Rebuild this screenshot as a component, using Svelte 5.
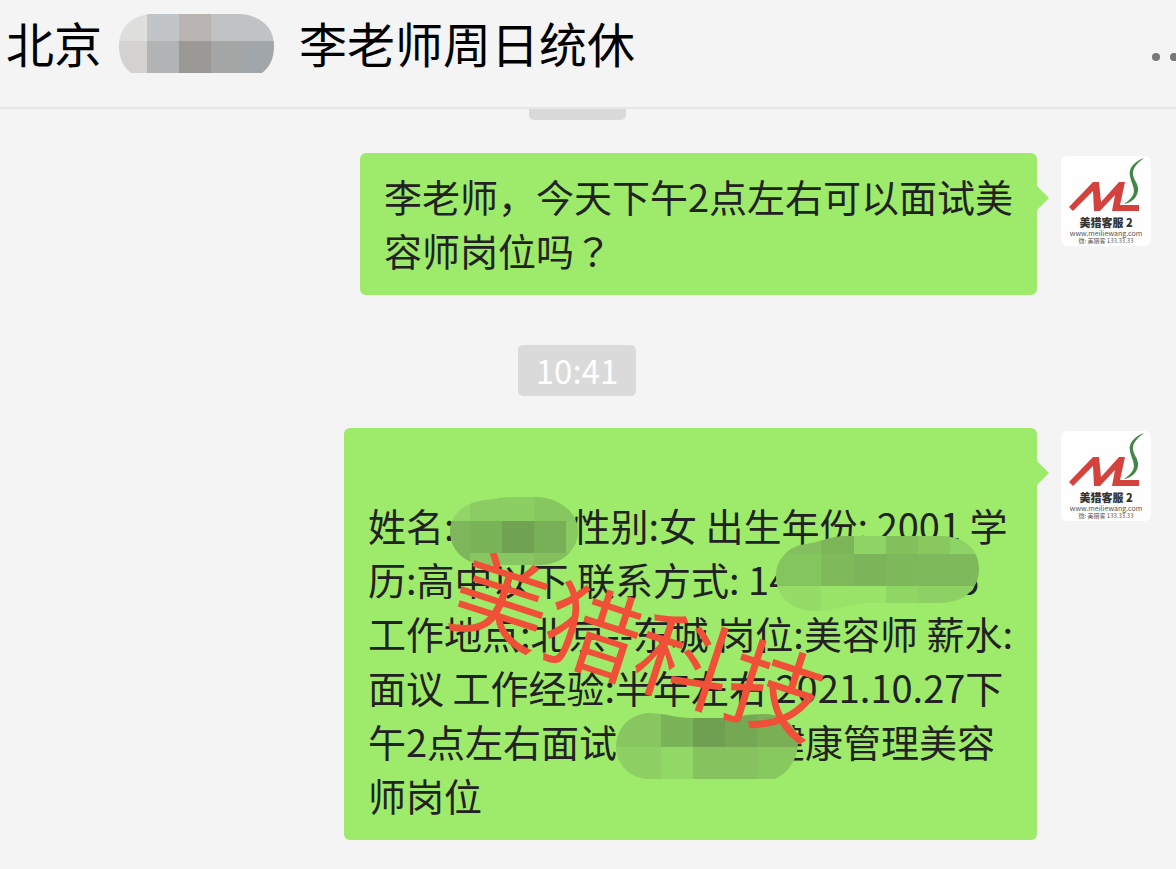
<script lang="ts">
  type Tile = [number, number, number, number, string];

  const titleTiles: Tile[] = [
    [0, 0, 28, 27, '#dededd'],
    [28, 0, 32, 27, '#c2c5c7'],
    [60, 0, 32, 27, '#b9b4b1'],
    [92, 0, 64, 27, '#c1c2c3'],
    [0, 27, 28, 33, '#d3d2d1'],
    [28, 27, 32, 33, '#b1b3b5'],
    [60, 27, 32, 33, '#9b9995'],
    [92, 27, 32, 33, '#a4a6a5'],
    [124, 27, 32, 33, '#a1a6aa']
  ];

  const nameTiles: Tile[] = [
    [0, 0, 20, 24, '#91d667'],
    [20, 0, 32, 24, '#8bcd63'],
    [52, 0, 32, 24, '#8bce62'],
    [84, 0, 44, 24, '#86c75f'],
    [0, 24, 20, 44, '#7db65b'],
    [20, 24, 32, 32, '#7ab458'],
    [52, 24, 32, 32, '#70a351'],
    [84, 24, 32, 32, '#78b057'],
    [116, 24, 12, 32, '#88c961'],
    [20, 56, 64, 12, '#87c660'],
    [84, 56, 44, 12, '#83c05d']
  ];

  const phoneTiles: Tile[] = [
    [0, 0, 45, 18, '#83bf5e'],
    [45, 0, 33, 18, '#7db659'],
    [78, 0, 32, 18, '#8fd367'],
    [110, 0, 32, 18, '#83c15d'],
    [142, 0, 32, 18, '#88c85f'],
    [174, 0, 30, 18, '#8ed365'],
    [0, 18, 45, 32, '#84c55e'],
    [45, 18, 33, 32, '#7fba5a'],
    [78, 18, 32, 32, '#7cb559'],
    [110, 18, 32, 32, '#7db95a'],
    [142, 18, 62, 32, '#7eba5b'],
    [0, 50, 45, 25, '#94dc67'],
    [45, 50, 65, 25, '#98e368'],
    [110, 50, 32, 25, '#90d665'],
    [142, 50, 62, 25, '#8dd164']
  ];

  const shopTiles: Tile[] = [
    [0, 0, 45, 34, '#88c760'],
    [45, 0, 32, 34, '#7bb358'],
    [77, 0, 32, 34, '#6f9f50'],
    [109, 0, 32, 34, '#74a853'],
    [141, 0, 41, 34, '#7aaf56'],
    [0, 34, 45, 32, '#8dcf62'],
    [45, 34, 32, 32, '#91d866'],
    [77, 34, 65, 32, '#86c35e'],
    [142, 34, 40, 32, '#88c95f']
  ];
</script>

{#snippet mosaic(id: string, width: number, height: number, shape: string, tiles: Tile[])}
  <svg class="mosaic {id}" {width} {height} viewBox="0 0 {width} {height}" aria-hidden="true">
    <clipPath id="{id}-shape"><path d={shape} /></clipPath>
    <g clip-path="url(#{id}-shape)" shape-rendering="crispEdges">
      {#each tiles as [x, y, w, h, fill]}
        <rect {x} {y} width={w} height={h} {fill} />
      {/each}
    </g>
  </svg>
{/snippet}

{#snippet avatar()}
  <svg class="avatar" viewBox="0 0 90 90" role="img" aria-label="美猎客服2">
    <rect width="90" height="90" rx="6" fill="#fefefe" />
    <path d="M8 51 L32 26 H38 L40 46 L58 26 H64 L59 49 H78 V55 H51 L54 39 L39 55 H33 L32 35 L12 55 Z" fill="#d3423c" />
    <path d="M83 2 C74 5 67 12 69 20 C70 27 75 33 72 39 C70 43 66 46 63 48 C70 47 76 42 77 35 C78 27 71 23 72 16 C73 10 78 6 83 2 Z" fill="#438747" />
    <text class="logo-name" x="45" y="71" text-anchor="middle">美猎客服 2</text>
    <text class="logo-small" x="45" y="80" text-anchor="middle">www.meiliewang.com</text>
    <text class="logo-tiny" x="45" y="87" text-anchor="middle">微: 美猎客 133.33.33</text>
  </svg>
{/snippet}

<main class="window">
  <header class="topbar">
    <h1 class="title">
      <span>北京</span>
      {@render mosaic('title-mask', 156, 59, 'M30 0 H122 C143 2 155 14 155 32 C155 44 151 53 143 59 H12 C4 53 0 44 0 32 C0 13 12 3 30 0 Z', titleTiles)}
      <span>李老师周日统休</span>
    </h1>
    <button class="more" type="button" aria-label="更多">
      <svg width="48" height="12" viewBox="0 0 48 12">
        <circle cx="6" cy="6" r="4" />
        <circle cx="24" cy="6" r="4" />
        <circle cx="42" cy="6" r="4" />
      </svg>
    </button>
  </header>

  <section class="chat">
    <div class="time-cut"></div>

    <article class="message">
      <div class="bubble">
        <p>李老师，今天下午2点左右可以面试美<br />容师岗位吗<span class="mark">？</span></p>
      </div>
      {@render avatar()}
    </article>

    <time class="time">10:41</time>

    <article class="message">
      <div class="bubble">
        <p>
          <br />
          姓名:<span class="hidden name">{@render mosaic('name-mask', 128, 68, 'M36 3 C46 2 52 0 62 0 H88 C110 1 128 16 128 34 C128 53 112 68 90 68 H38 C16 68 0 54 0 34 C0 18 14 5 36 3 Z', nameTiles)}</span>性别:女 出生年份: 2001 学<br />
          历:高中以下 联系方式: 14<span class="hidden phone">{@render mosaic('phone-mask', 204, 75, 'M30 8 C46 6 52 0 72 0 H166 C190 1 203 14 203 33 C203 53 188 67 164 67 H90 C72 69 56 75 38 75 C14 74 0 60 0 40 C0 24 12 10 30 8 Z', phoneTiles)}</span>5<br />
          工作地点:北京--东城 岗位:美容师 薪水:<br />
          面议 工作经验:半年左右 2021.10.27下<br />
          午2点左右面试<span class="hidden shop">{@render mosaic('shop-mask', 182, 66, 'M33 0 C48 0 60 5 75 5 H105 C122 4 132 1 150 1 C170 2 182 14 182 30 C182 46 172 60 159 66 H30 C12 64 0 50 0 34 C0 15 14 1 33 0 Z', shopTiles)}</span>健康管理美容<br />
          师岗位
        </p>
        <span class="watermark">美猎科技</span>
      </div>
      {@render avatar()}
    </article>
  </section>
</main>

<style>
  :global(body) {
    margin: 0;
    background: #f4f4f4;
  }

  .window {
    min-height: 100vh;
    background: #f4f4f4;
    font-family: 'Noto Sans CJK SC', 'Noto Sans', sans-serif;
    font-weight: 400;
    color: #222;
    overflow: hidden;
  }

  .topbar {
    display: flex;
    align-items: center;
    justify-content: space-between;
    box-sizing: border-box;
    height: 109px;
    padding: 0 0 20px 6px;
    border-bottom: 2px solid #e6e6e6;
    overflow: hidden;
  }

  .title {
    display: flex;
    align-items: center;
    margin: 0;
    font-size: 48px;
    font-weight: 400;
    line-height: 60px;
    color: #000;
    white-space: nowrap;
  }

  .title span {
    padding: 0 17px 4px 0;
  }

  .title-mask {
    margin-right: 24px;
  }

  .mosaic {
    display: block;
    flex-shrink: 0;
  }

  .more {
    flex-shrink: 0;
    display: flex;
    margin: 26px -22px 0 0;
    padding: 0;
    border: none;
    background: none;
    cursor: pointer;
  }

  .more svg {
    fill: #777;
  }

  .chat {
    display: flex;
    flex-direction: column;
    padding: 0 25px 29px;
  }

  .time-cut {
    align-self: center;
    width: 97px;
    height: 11px;
    margin: 0 22px 33px 0;
    border-radius: 0 0 5px 5px;
    background: #dadada;
  }

  .time {
    align-self: center;
    margin: 50px 22px 32px 0;
    padding: 0 18px 1px;
    border-radius: 5px;
    background: #dadada;
    color: #fff;
    font-size: 33px;
    line-height: 50px;
  }

  .message {
    display: flex;
    justify-content: flex-end;
    align-items: flex-start;
    gap: 24px;
  }

  .bubble {
    position: relative;
    padding: 16px 24px 18px;
    border-radius: 6px;
    background: #9eea6a;
    font-size: 38px;
    line-height: 54px;
  }

  .bubble::after {
    content: '';
    position: absolute;
    top: 33px;
    left: 100%;
    border: 12px solid transparent;
    border-right: none;
    border-left-color: #9eea6a;
  }

  .bubble p {
    margin: 0;
    white-space: nowrap;
  }

  /* question mark sits in the middle of its box */
  .mark {
    font-family: 'Noto Sans CJK TC', sans-serif;
  }

  .avatar {
    flex-shrink: 0;
    width: 90px;
    height: 90px;
    margin-top: 3px;
  }

  .logo-name {
    font-size: 11px;
    font-weight: 900;
    fill: #333;
  }

  .logo-small {
    font-size: 7px;
    fill: #555;
  }

  .logo-tiny {
    font-size: 6px;
    fill: #555;
  }

  .hidden {
    position: relative;
    display: inline-block;
    height: 1px;
  }

  .hidden :global(.mosaic) {
    position: absolute;
  }

  .name {
    width: 118px;
  }

  .phone {
    width: 168px;
  }

  .shop {
    width: 150px;
  }

  .name-mask {
    left: -4px;
    bottom: -24px;
  }

  .phone-mask {
    left: -14px;
    bottom: -16px;
  }

  .shop-mask {
    left: -1px;
    bottom: -22px;
  }

  .watermark {
    position: absolute;
    top: 50%;
    left: 50%;
    color: #f04f38;
    font-size: 96px;
    line-height: 96px;
    white-space: nowrap;
    transform: translate(-63%, -42%) rotate(18deg);
  }
</style>
